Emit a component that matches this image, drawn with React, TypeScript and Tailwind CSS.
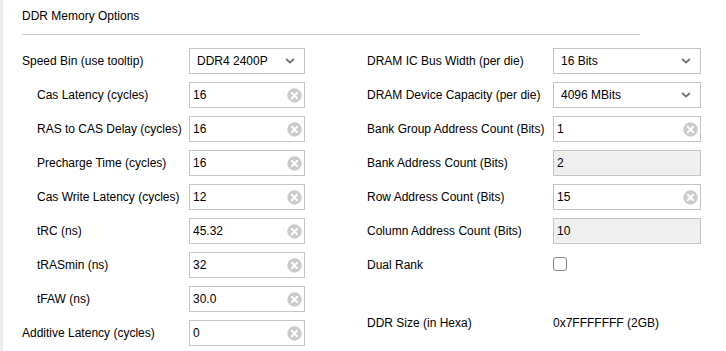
import React from "react";

const font = { fontFamily: '"Liberation Sans", Arial, sans-serif' };

function Chevron() {
  return (
    <svg width="10" height="6" viewBox="0 0 10 6" className="shrink-0">
      <path d="M1.2 1 L5 4.6 L8.8 1" fill="none" stroke="#6f6f6f" strokeWidth="1.8" />
    </svg>
  );
}

function ClearIcon() {
  return (
    <svg width="15" height="15" viewBox="0 0 15 15" className="shrink-0">
      <circle cx="7.5" cy="7.5" r="7.2" fill="#cbcbcb" />
      <path d="M4.8 4.8 L10.2 10.2 M10.2 4.8 L4.8 10.2" stroke="#fff" strokeWidth="2" strokeLinecap="round" />
    </svg>
  );
}

function Select({ value, w }: { value: string; w: string }) {
  return (
    <div className={`${w} h-[26px] border border-[#c4c4c4] bg-white flex items-center justify-between pl-[7px] pr-[9px]`}>
      <span>{value}</span>
      <Chevron />
    </div>
  );
}

function TextInput({ value, w, disabled }: { value: string; w: string; disabled?: boolean }) {
  return (
    <div
      className={`${w} h-[26px] border border-[#c4c4c4] flex items-center justify-between pl-[3px] pr-[2px] ${
        disabled ? "bg-[#efefef]" : "bg-white"
      }`}
    >
      <span>{value}</span>
      {!disabled && <ClearIcon />}
    </div>
  );
}

type Row = { label: string; indent?: boolean; kind: "select" | "input" | "disabled"; value: string };

const left: Row[] = [
  { label: "Speed Bin (use tooltip)", kind: "select", value: "DDR4 2400P" },
  { label: "Cas Latency (cycles)", indent: true, kind: "input", value: "16" },
  { label: "RAS to CAS Delay (cycles)", indent: true, kind: "input", value: "16" },
  { label: "Precharge Time (cycles)", indent: true, kind: "input", value: "16" },
  { label: "Cas Write Latency (cycles)", indent: true, kind: "input", value: "12" },
  { label: "tRC (ns)", indent: true, kind: "input", value: "45.32" },
  { label: "tRASmin (ns)", indent: true, kind: "input", value: "32" },
  { label: "tFAW (ns)", indent: true, kind: "input", value: "30.0" },
  { label: "Additive Latency (cycles)", kind: "input", value: "0" },
];

const right: Row[] = [
  { label: "DRAM IC Bus Width (per die)", kind: "select", value: "16 Bits" },
  { label: "DRAM Device Capacity (per die)", kind: "select", value: "4096 MBits" },
  { label: "Bank Group Address Count (Bits)", kind: "input", value: "1" },
  { label: "Bank Address Count (Bits)", kind: "disabled", value: "2" },
  { label: "Row Address Count (Bits)", kind: "input", value: "15" },
  { label: "Column Address Count (Bits)", kind: "disabled", value: "10" },
];

function Field({ r, w }: { r: Row; w: string }) {
  if (r.kind === "select") return <Select value={r.value} w={w} />;
  return <TextInput value={r.value} w={w} disabled={r.kind === "disabled"} />;
}

export default function App() {
  return (
    <div
      style={font}
      className="w-[726px] h-[351px] bg-white border-l-[3px] border-[#ececec] pl-[19px] text-[12px] leading-[14px] text-black overflow-hidden"
    >
      <div className="pt-[9px] h-[34px]">DDR Memory Options</div>
      <div className="w-[618px] h-px bg-[#c8c8c8]" />
      <div className="flex mt-[13px]">
        <div className="w-[345px] flex flex-col gap-[8px]">
          {left.map((r) => (
            <div key={r.label} className="flex items-center h-[26px]">
              <div className={`w-[167px] ${r.indent ? "pl-[15px]" : ""}`}>{r.label}</div>
              <Field r={r} w="w-[116px]" />
            </div>
          ))}
        </div>
        <div className="flex flex-col gap-[8px]">
          {right.map((r) => (
            <div key={r.label} className="flex items-center h-[26px]">
              <div className="w-[186px]">{r.label}</div>
              <Field r={r} w="w-[148px]" />
            </div>
          ))}
          <div className="flex items-center h-[26px]">
            <div className="w-[186px]">Dual Rank</div>
            <div className="w-[14px] h-[14px] border border-[#8a8a8a] rounded-[3px] bg-white mt-[-3px]" />
          </div>
          <div className="flex items-center h-[26px] mt-[24px]">
            <div className="w-[186px]">DDR Size (in Hexa)</div>
            <div>0x7FFFFFFF (2GB)</div>
          </div>
        </div>
      </div>
    </div>
  );
}
